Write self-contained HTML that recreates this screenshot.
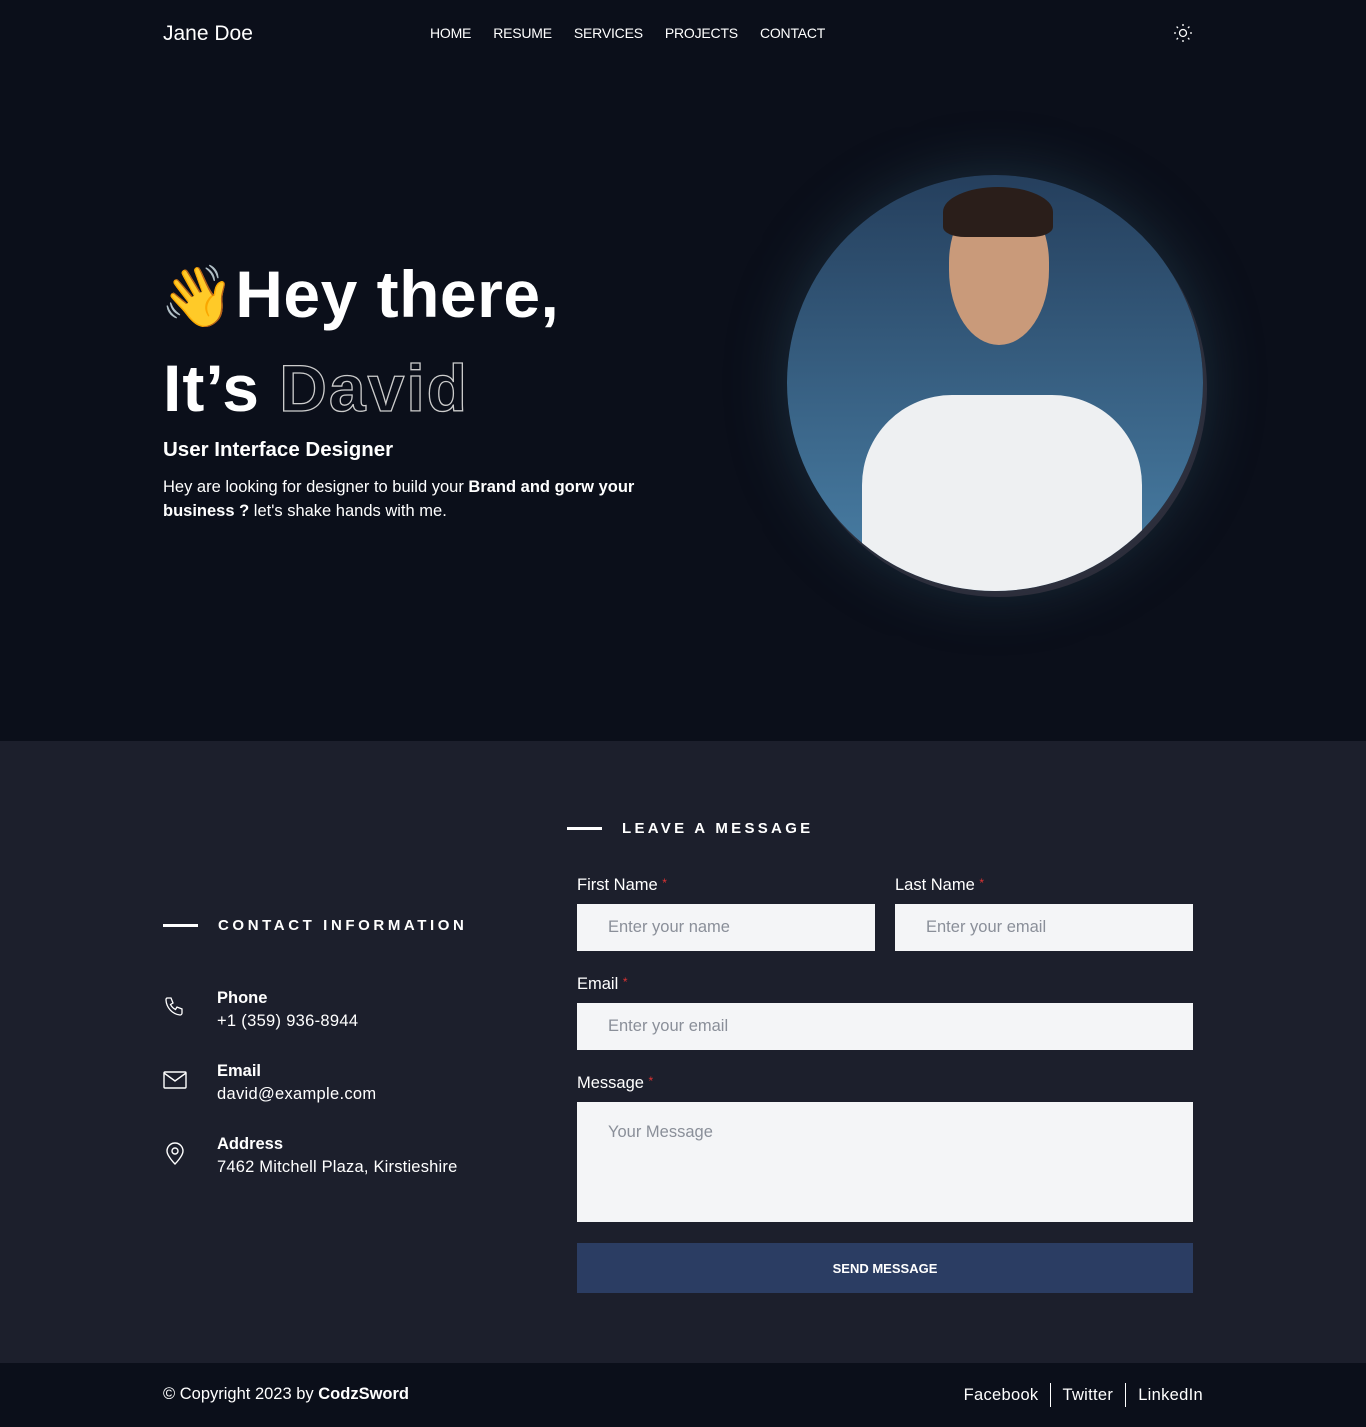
<!DOCTYPE html>
<html><head><meta charset="utf-8"><style>
*{margin:0;padding:0;box-sizing:border-box}
body{width:1366px;height:1427px;background:#0b0f1a;font-family:"Liberation Sans",sans-serif;color:#fff;position:relative;overflow:hidden}
.a{position:absolute}
nav a{color:#fff;font-size:14px;margin-right:22px;text-decoration:none;letter-spacing:-0.2px}
.inp{position:absolute;background:#f4f5f7;color:#8a8f99;font-size:16.5px;padding-left:31px;display:flex;align-items:center}
.lbl{position:absolute;font-size:16.5px}
.lbl b{color:#d33;font-weight:normal;font-size:12px;vertical-align:top}
</style></head><body>
<div class="a" style="left:163px;top:22px;font-size:21px">Jane Doe</div>
<nav class="a" style="left:430px;top:25px"><a>HOME</a><a>RESUME</a><a>SERVICES</a><a>PROJECTS</a><a>CONTACT</a></nav>
<svg class="a" style="left:1173px;top:23px" width="20" height="20" viewBox="0 0 20 20" fill="none" stroke="#fff" stroke-width="1.3"><circle cx="10" cy="10" r="3.5"/><path d="M10 1v2M10 17v2M1 10h2M17 10h2M3.6 3.6l1.4 1.4M15 15l1.4 1.4M3.6 16.4L5 15M15 5l1.4-1.4"/></svg>

<div class="a" style="left:160px;top:256px;font-size:66px;font-weight:bold;letter-spacing:0.5px;line-height:76px"><span style="font-size:60px">👋</span>Hey there,</div>
<div class="a" style="left:163px;top:350px;font-size:66px;font-weight:bold;line-height:76px;letter-spacing:1px">It’s <span style="color:transparent;-webkit-text-stroke:1.3px #ccc;letter-spacing:2px">David</span></div>
<div class="a" style="left:163px;top:438px;font-size:20.5px;font-weight:bold">User Interface Designer</div>
<div class="a" style="left:163px;top:475px;width:540px;font-size:16.5px;line-height:24px">Hey are looking for designer to build your <b>Brand and gorw your<br>business ?</b> let's shake hands with me.</div>

<div class="a" style="left:787px;top:175px;width:416px;height:416px;border-radius:50%;background:linear-gradient(#253f5d,#4a81a8);box-shadow:0 0 60px rgba(60,110,130,.35),4px 6px 0 #2a2430;overflow:hidden">
<div class="a" style="left:75px;top:220px;width:280px;height:260px;background:#eef0f2;border-radius:90px 90px 0 0"></div>
<div class="a" style="left:162px;top:20px;width:100px;height:150px;background:#c99a7a;border-radius:45% 45% 50% 50%"></div>
<div class="a" style="left:156px;top:12px;width:110px;height:50px;background:#2a1e1a;border-radius:50% 50% 20% 20%"></div>
</div>

<div class="a" style="left:0;top:741px;width:1366px;height:622px;background:#1c1f2c"></div>
<div class="a" style="left:567px;top:827px;width:35px;height:3px;background:#fff"></div>
<div class="a" style="left:622px;top:820px;font-size:15px;font-weight:bold;letter-spacing:3.3px">LEAVE A MESSAGE</div>
<div class="a" style="left:163px;top:924px;width:35px;height:3px;background:#fff"></div>
<div class="a" style="left:218px;top:917px;font-size:15px;font-weight:bold;letter-spacing:3.6px">CONTACT INFORMATION</div>

<svg class="a" style="left:163px;top:995px" width="24" height="24" viewBox="0 0 24 24" fill="none" stroke="#fff" stroke-width="1.3"><path d="M4 3h4l2 5-2.5 1.5a11 11 0 005 5L14 12l5 2v4a2 2 0 01-2 2A16 16 0 013 5a2 2 0 011-2z"/></svg>
<div class="a" style="left:217px;top:989px;font-size:16.5px;font-weight:bold">Phone</div>
<div class="a" style="left:217px;top:1012px;font-size:16.5px;letter-spacing:0.3px">+1 (359) 936-8944</div>
<svg class="a" style="left:163px;top:1069px" width="24" height="22" viewBox="0 0 24 22" fill="none" stroke="#fff" stroke-width="1.4"><rect x="1" y="3" width="22" height="16" rx="1"/><path d="M1 4l11 8 11-8"/></svg>
<div class="a" style="left:217px;top:1062px;font-size:16.5px;font-weight:bold">Email</div>
<div class="a" style="left:217px;top:1085px;font-size:16.5px;letter-spacing:0.3px">david@example.com</div>
<svg class="a" style="left:163px;top:1141px" width="24" height="24" viewBox="0 0 24 24" fill="none" stroke="#fff" stroke-width="1.4"><path d="M12 23s-8-8-8-13a8 8 0 0116 0c0 5-8 13-8 13z"/><circle cx="12" cy="10" r="3"/></svg>
<div class="a" style="left:217px;top:1135px;font-size:16.5px;font-weight:bold">Address</div>
<div class="a" style="left:217px;top:1158px;font-size:16.5px;letter-spacing:0.2px">7462 Mitchell Plaza, Kirstieshire</div>

<div class="lbl" style="left:577px;top:876px">First Name <b>*</b></div>
<div class="lbl" style="left:895px;top:876px">Last Name <b>*</b></div>
<div class="inp" style="left:577px;top:904px;width:298px;height:47px">Enter your name</div>
<div class="inp" style="left:895px;top:904px;width:298px;height:47px">Enter your email</div>
<div class="lbl" style="left:577px;top:975px">Email <b>*</b></div>
<div class="inp" style="left:577px;top:1003px;width:616px;height:47px">Enter your email</div>
<div class="lbl" style="left:577px;top:1074px">Message <b>*</b></div>
<div class="inp" style="left:577px;top:1102px;width:616px;height:120px;align-items:flex-start;padding-top:21px">Your Message</div>
<div class="a" style="left:577px;top:1243px;width:616px;height:50px;background:#2b3d63;display:flex;align-items:center;justify-content:center;font-size:13px;font-weight:bold">SEND MESSAGE</div>

<div class="a" style="left:163px;top:1385px;font-size:16.5px">© Copyright 2023 by <b>CodzSword</b></div>
<div class="a" style="right:163px;top:1383px;font-size:16.5px;display:flex;line-height:24px;letter-spacing:0.3px">
<span style="padding-right:11px;border-right:1px solid #fff">Facebook</span><span style="padding:0 12px;border-right:1px solid #fff">Twitter</span><span style="padding-left:12px">LinkedIn</span></div>
</body></html>
